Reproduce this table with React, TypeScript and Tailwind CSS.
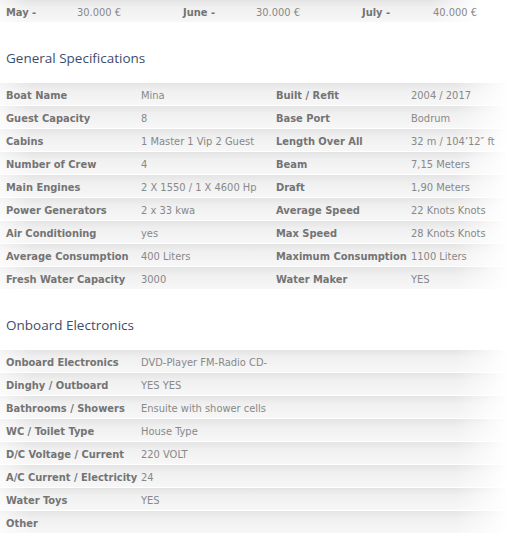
import React from "react";

const rowBg =
  "bg-[linear-gradient(to_right,rgba(255,255,255,0.6)_0%,rgba(255,255,255,0)_6%,rgba(255,255,255,0)_86%,#ffffff_96%),linear-gradient(to_bottom,#e4e4e4_0%,#f0f0f0_35%,#f7f7f7_100%)]";

const general: [string, string, string, string][] = [
  ["Boat Name", "Mina", "Built / Refit", "2004 / 2017"],
  ["Guest Capacity", "8", "Base Port", "Bodrum"],
  ["Cabins", "1 Master 1 Vip 2 Guest", "Length Over All", "32 m / 104\u201912\u2033 ft"],
  ["Number of Crew", "4", "Beam", "7,15 Meters"],
  ["Main Engines", "2 X 1550 / 1 X 4600 Hp", "Draft", "1,90 Meters"],
  ["Power Generators", "2 x 33 kwa", "Average Speed", "22 Knots Knots"],
  ["Air Conditioning", "yes", "Max Speed", "28 Knots Knots"],
  ["Average Consumption", "400 Liters", "Maximum Consumption", "1100 Liters"],
  ["Fresh Water Capacity", "3000", "Water Maker", "YES"],
];

const electronics: [string, string][] = [
  ["Onboard Electronics", "DVD-Player FM-Radio CD-"],
  ["Dinghy / Outboard", "YES YES"],
  ["Bathrooms / Showers", "Ensuite with shower cells"],
  ["WC / Toilet Type", "House Type"],
  ["D/C Voltage / Current", "220 VOLT"],
  ["A/C Current / Electricity", "24"],
  ["Water Toys", "YES"],
  ["Other", ""],
];

const font = "font-['DejaVu_Sans_Condensed','DejaVu_Sans',sans-serif]";

function Label({ children }: { children: React.ReactNode }) {
  return (
    <div className="pl-[6px] font-bold text-[#747474] whitespace-nowrap">{children}</div>
  );
}
function Value({ children }: { children: React.ReactNode }) {
  return <div className="pl-[6px] text-[#888888] whitespace-nowrap">{children}</div>;
}

export default function App() {
  return (
    <div className={`w-[529px] h-[543px] overflow-hidden bg-white ${font} text-[11px]`}>
      <div
        className={`h-[22px] pt-[4px] w-[500px] grid grid-cols-[71px_106px_73px_106px_71px_73px] items-center ${rowBg}`}
      >
        <Label>May -</Label>
        <Value>30.000 €</Value>
        <Label>June -</Label>
        <Value>30.000 €</Value>
        <Label>July -</Label>
        <Value>40.000 €</Value>
      </div>

      <h2 className="pt-[26px] pb-[15px] pl-[6px] h-[61px] leading-[20px] text-[13.5px] text-[#3d4d6d] font-['Open_Sans',sans-serif]">
        General Specifications
      </h2>

      <div className="w-[529px]">
        {general.map((r, i) => (
          <div
            key={i}
            className={`h-[23px] pt-[4px] grid grid-cols-[135px_135px_135px_124px] items-center border-b border-white ${rowBg}`}
          >
            <Label>{r[0]}</Label>
            <Value>{r[1]}</Value>
            <Label>{r[2]}</Label>
            <Value>{r[3]}</Value>
          </div>
        ))}
      </div>

      <h2 className="pt-[25px] pb-[15px] pl-[6px] h-[60px] leading-[20px] text-[13.5px] text-[#3d4d6d] font-['Open_Sans',sans-serif]">
        Onboard Electronics
      </h2>

      <div className="w-[529px]">
        {electronics.map((r, i) => (
          <div
            key={i}
            className={`h-[23px] pt-[4px] grid grid-cols-[135px_394px] items-center border-b border-white ${rowBg}`}
          >
            <Label>{r[0]}</Label>
            <Value>{r[1]}</Value>
          </div>
        ))}
      </div>
    </div>
  );
}
